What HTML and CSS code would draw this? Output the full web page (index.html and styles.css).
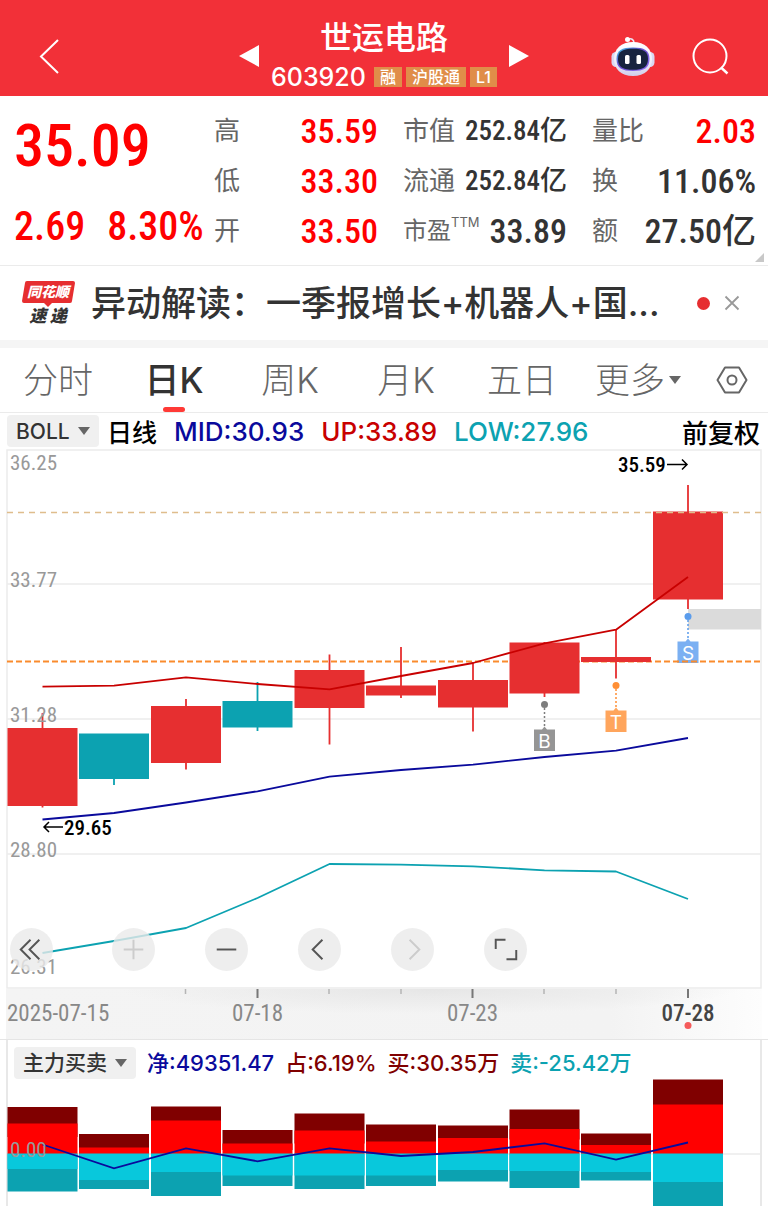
FILE: index.html
```html
<!DOCTYPE html>
<html lang="zh-CN">
<head>
<meta charset="utf-8">
<meta name="viewport" content="width=device-width, initial-scale=1">
<title>世运电路 603920</title>
<link rel="stylesheet" href="styles.css">
</head>
<body>
<header class="topbar">
  <button class="icon-btn back" aria-label="返回">
    <svg width="22" height="36" viewBox="0 0 22 36"><path d="M20 2 3 18.500 20 35" fill="none" stroke="#fff" stroke-width="2"/></svg>
  </button>
  <div class="stock">
    <button class="icon-btn" aria-label="上一只"><svg width="20" height="24" viewBox="0 0 20 24"><path d="M20 1v22L0 12z" fill="#fff"/></svg></button>
    <div class="stock-id">
      <h1 class="stock-name">世运电路</h1>
      <div class="stock-meta"><span class="code">603920</span><span class="tag">融</span><span class="tag">沪股通</span><span class="tag">L1</span></div>
    </div>
    <button class="icon-btn" aria-label="下一只"><svg width="20" height="24" viewBox="0 0 20 24"><path d="M0 1v22L20 12z" fill="#fff"/></svg></button>
  </div>
  <div class="tools">
    <button class="icon-btn" aria-label="智能助手">
      <svg width="44" height="40" viewBox="0 0 44 40">
        <defs>
          <linearGradient id="shell" x1="0" y1="0" x2="0" y2="1"><stop offset="0" stop-color="#fff"/><stop offset=".6" stop-color="#eeedfa"/><stop offset="1" stop-color="#cfcdea"/></linearGradient>
          <linearGradient id="rim" x1="0" y1="0" x2="1" y2="1"><stop offset="0" stop-color="#35c3dc"/><stop offset=".4" stop-color="#6a4fd0"/><stop offset="1" stop-color="#8d6cf0"/></linearGradient>
        </defs>
        <path d="M17 3.500C20 2 23 3 23 7" fill="none" stroke="#e9e8f6" stroke-width="1.600"/>
        <circle cx="16.500" cy="3.500" r="2.500" fill="#fff"/>
        <rect x="0.500" y="16" width="9" height="15" rx="4.500" fill="#d9d8f2"/>
        <rect x="34.500" y="16" width="9" height="15" rx="4.500" fill="#d9d8f2"/>
        <path d="M22 6C34 6 41 13 41 23S34 40 22 40 3 33 3 23 10 6 22 6z" fill="url(#shell)"/>
        <path d="M22 11.500C33 11.500 38.500 14 38.500 23S33 35 22 35 5.500 32 5.500 23 11 11.500 22 11.500z" fill="url(#rim)"/>
        <path d="M22 12.700C32 12.700 37 15 37 23S32 33.800 22 33.800 7 31 7 23 12 12.700 22 12.700z" fill="#17233f"/>
        <rect x="14" y="19" width="4.500" height="9" rx="1.500" fill="#fff"/>
        <rect x="25.500" y="19" width="4.500" height="9" rx="1.500" fill="#fff"/>
      </svg>
    </button>
    <button class="icon-btn" aria-label="搜索">
      <svg width="38" height="38" viewBox="0 0 38 38"><circle cx="18" cy="19" r="16.500" fill="none" stroke="#fff" stroke-width="2"/><path d="M29 30.500 35.500 36.500" stroke="#fff" stroke-width="2.400"/></svg>
    </button>
  </div>
</header>

<main>
<section class="quote">
  <div class="last">
    <div class="price">35.09</div>
    <div class="change"><span>2.69</span><span>8.30%</span></div>
  </div>
  <dl class="stats">
    <div class="stat"><dt>高</dt><dd class="up">35.59</dd></div>
    <div class="stat"><dt>市值</dt><dd class="small">252.84亿</dd></div>
    <div class="stat"><dt>量比</dt><dd class="up">2.03</dd></div>
    <div class="stat"><dt>低</dt><dd class="up">33.30</dd></div>
    <div class="stat"><dt>流通</dt><dd class="small">252.84亿</dd></div>
    <div class="stat"><dt>换</dt><dd>11.06%</dd></div>
    <div class="stat"><dt>开</dt><dd class="up">33.50</dd></div>
    <div class="stat"><dt class="pe">市盈<sup>TTM</sup></dt><dd>33.89</dd></div>
    <div class="stat"><dt>额</dt><dd>27.50亿</dd></div>
  </dl>
  <svg class="corner" width="9" height="9" viewBox="0 0 9 9"><path d="M9 0v9H0z" fill="#c8c8c8"/></svg>
</section>

<section class="news">
  <svg class="news-logo" width="54" height="48" viewBox="0 0 54 48">
    <path d="M5 2h46q2 0 2 2l-3 18q0 2-2 2H30l-4 4-4-4H2q-2 0-2-2L3 4q0-2 2-2z" fill="#e62e30"/>
    <text x="26" y="18" class="logo-top">同花顺</text>
    <text x="26" y="43" class="logo-bottom">速 递</text>
  </svg>
  <a class="news-title" href="#news">异动解读：一季报增长+机器人+国...</a>
  <span class="dot"></span>
  <button class="icon-btn" aria-label="关闭"><svg width="16" height="16" viewBox="0 0 16 16"><path d="M1.500 1.500l13 13M14.500 1.500l-13 13" stroke="#999" stroke-width="1.800"/></svg></button>
</section>

<nav class="tabs">
  <button class="tab">分时</button>
  <button class="tab active">日K</button>
  <button class="tab">周K</button>
  <button class="tab">月K</button>
  <button class="tab">五日</button>
  <button class="tab">更多<svg width="12" height="9" viewBox="0 0 12 9"><path d="M0 0h12L6 8z" fill="#666"/></svg></button>
  <button class="tab" aria-label="设置"><svg width="32" height="28" viewBox="0 0 32 28"><path d="M9 1.500h14L30.500 14 23 26.500H9L1.500 14z" fill="none" stroke="#666" stroke-width="2" stroke-linejoin="round"/><circle cx="16" cy="14" r="4.500" fill="none" stroke="#666" stroke-width="2"/></svg></button>
</nav>

<div class="indicator">
  <label class="picker"><select aria-label="主图指标"><option>BOLL</option></select><svg width="12" height="8" viewBox="0 0 12 8"><path d="M0 0h12L6 8z" fill="#666"/></svg></label>
  <span class="period">日线</span>
  <span class="mid">MID:30.93</span>
  <span class="red">UP:33.89</span>
  <span class="teal">LOW:27.96</span>
  <span class="adjust">前复权</span>
</div>

<section class="chart">
  <svg class="plot" viewBox="0 449 768 540" role="img" aria-label="日K线图">
    <g stroke="#ebebeb" stroke-width="1.500" fill="none">
      <path d="M7 584H761M7 719H761M7 854H761"/>
      <rect x="7" y="450" width="754" height="538"/>
    </g>
    <rect x="688" y="609" width="73" height="20.500" fill="#dbdbdb"/>
    <path d="M7 661.500H761" stroke="#fa8b2d" stroke-width="2" stroke-dasharray="6 3"/>
    <g stroke="#e62f30" stroke-width="1.800">
      <path d="M42.500 713V807.500M186 699V769.500M329.500 654.500V744.500M401 647V698M473 663V731.500M544.500 642V697M616 630V678.500M688 485V609"/>
    </g>
    <path d="M114 740V785M257.500 682V731" stroke="#0ca2b1" stroke-width="1.800"/>
    <g fill="#e62f30">
      <rect x="7.500" y="728" width="70" height="78"/>
      <rect x="151" y="706" width="70" height="57"/>
      <rect x="294.500" y="670" width="70" height="38"/>
      <rect x="366" y="685.500" width="70" height="10"/>
      <rect x="438" y="680" width="70" height="27.500"/>
      <rect x="509.500" y="642.500" width="70" height="51"/>
      <rect x="581" y="657" width="70" height="5"/>
      <rect x="653" y="511.500" width="70" height="88"/>
    </g>
    <g fill="#0ca2b1">
      <rect x="79" y="733.500" width="70" height="45.500"/>
      <rect x="222.500" y="701" width="70" height="26.500"/>
    </g>
    <path d="M7 512.500H761" stroke="#dfbd8c" stroke-width="1.300" stroke-dasharray="6 5"/>
    <g fill="none" stroke-width="1.800" stroke-linejoin="round">
      <polyline stroke="#c80000" points="42.500,686.700 114,685.700 186,677.300 257.500,684 329.500,689.300 401,676 473,663 544.500,643.300 616,629.700 688,577"/>
      <polyline stroke="#0a0a9c" points="42.500,819.500 114,813 186,802.500 257.500,791.300 329.500,776.700 401,770 473,764.700 544.500,757 616,750.700 688,738"/>
      <polyline stroke="#0ca2b1" points="42.500,953 114,941 186,928 257.500,898 329.500,864 401,864.700 473,866.300 544.500,870.300 616,871.500 688,899"/>
    </g>
    <g class="axis-num">
      <text x="10" y="470">36.25</text><text x="10" y="587">33.77</text><text x="10" y="722">31.28</text><text x="10" y="857">28.80</text><text x="10" y="974">26.31</text>
    </g>
    <g class="extreme">
      <text x="64" y="835">29.65</text><text x="618" y="472">35.59</text>
      <path d="M63 827H44M49 822l-5 5 5 5M667 464.500H687M682 459.500l5 5-5 5"/>
    </g>
    <g class="marker" fill="#5a9cec" stroke="#5a9cec"><circle cx="688" cy="616.500" r="3.500" stroke="none"/><path d="M688 620V640" stroke-width="1.500" stroke-dasharray="2 2"/><path d="M677.500 641.500h8l2.500-3 2.500 3h8v21.500h-21z" fill="#7bb0f2" stroke="none"/><text x="688" y="659.500">S</text></g>
    <g class="marker" fill="#ff8f35" stroke="#ff8f35"><circle cx="616" cy="685.500" r="3.500" stroke="none"/><path d="M616 689V709" stroke-width="1.500" stroke-dasharray="2 2"/><path d="M605.500 710.500h8l2.500-3 2.500 3h8v21.500h-21z" fill="#ffa55c" stroke="none"/><text x="616" y="728.500">T</text></g>
    <g class="marker" fill="#7d7d7d" stroke="#7d7d7d"><circle cx="544.500" cy="704.500" r="3.500" stroke="none"/><path d="M544.500 708V728" stroke-width="1.500" stroke-dasharray="2 2"/><path d="M534 729.500h8l2.500-3 2.500 3h8v21.500h-21z" fill="#959595" stroke="none"/><text x="544.500" y="747.500">B</text></g>
    <path d="M677 661.500H699" stroke="#fa8b2d" stroke-width="2" stroke-dasharray="6 3" stroke-dashoffset="4"/>
  </svg>
  <div class="controls">
    <button class="round first" aria-label="最早"><svg viewBox="0 0 44 44"><path d="M21 12 11 22l10 10M30 12 20 22l10 10"/></svg></button>
    <button class="round" aria-label="放大" disabled><svg viewBox="0 0 44 44"><path d="M12 22h20M22 12v20"/></svg></button>
    <button class="round" aria-label="缩小"><svg viewBox="0 0 44 44"><path d="M12 22h20"/></svg></button>
    <button class="round" aria-label="左移"><svg viewBox="0 0 44 44"><path d="M25 12 15 22l10 10"/></svg></button>
    <button class="round" aria-label="右移" disabled><svg viewBox="0 0 44 44"><path d="M19 12l10 10-10 10"/></svg></button>
    <button class="round" aria-label="全屏"><svg viewBox="0 0 44 44"><path d="M12 21.500V12h10M23 32h10v-9.500"/></svg></button>
  </div>
</section>

<svg class="plot dates" viewBox="0 0 768 50" role="img" aria-label="日期轴">
  <defs>
    <linearGradient id="fade"><stop offset="0" stop-color="#f4f4f4"/><stop offset=".8" stop-color="#f3f3f3"/><stop offset="1" stop-color="#fdfdfd"/></linearGradient>
    <radialGradient id="shade" cx=".5" cy="0" r=".5"><stop offset="0" stop-color="#e6e6e6"/><stop offset="1" stop-color="#e6e6e6" stop-opacity="0"/></radialGradient>
  </defs>
  <rect x="6" width="756" height="50" fill="url(#fade)"/>
  <rect x="120" width="620" height="50" fill="url(#shade)"/>
  <path d="M185.500 0v5M329 0v5M401 0v5M544 0v5M616 0v5" stroke="#b5b5b5" stroke-width="1.500"/>
  <path d="M257.500 0v9M472.500 0v9M688 0v9" stroke="#777" stroke-width="2"/>
  <text x="7" y="32">2025-07-15</text>
  <text x="257.500" y="32" text-anchor="middle">07-18</text>
  <text x="472.500" y="32" text-anchor="middle">07-23</text>
  <text x="688" y="32" text-anchor="middle" class="today">07-28</text>
  <circle cx="688" cy="36.500" r="3.500" fill="#f55b5b"/>
</svg>

<section class="flow">
  <div class="legend">
    <label class="picker"><select aria-label="副图指标"><option>主力买卖</option></select><svg width="12" height="8" viewBox="0 0 12 8"><path d="M0 0h12L6 8z" fill="#666"/></svg></label>
    <span class="mid">净:49351.47</span>
    <span class="maroon">占:6.19%</span>
    <span class="maroon">买:30.35万</span>
    <span class="teal">卖:-25.42万</span>
  </div>
  <svg class="plot" viewBox="0 1079 768 127" role="img" aria-label="主力买卖图">
    <path d="M7 1154H761" stroke="#ebebeb" stroke-width="1.500"/>
    <path d="M7 1079V1206M761 1079V1206" stroke="#e8e8e8" stroke-width="2"/>
    <g fill="#800000">
      <rect x="7.500" y="1107" width="70" height="30"/><rect x="79" y="1134" width="70" height="18"/><rect x="151" y="1106.500" width="70" height="30"/><rect x="222.500" y="1130" width="70" height="20"/><rect x="294.500" y="1113.500" width="70" height="30"/><rect x="366" y="1124.500" width="70" height="25"/><rect x="438" y="1125.500" width="70" height="25"/><rect x="509.500" y="1109.500" width="70" height="30"/><rect x="581" y="1133.500" width="70" height="18"/><rect x="653" y="1079.500" width="70" height="40"/>
    </g>
    <g fill="#f00">
      <rect x="7.500" y="1123.500" width="70" height="30.500"/><rect x="79" y="1147.500" width="70" height="6.500"/><rect x="151" y="1120.500" width="70" height="33.500"/><rect x="222.500" y="1143.500" width="70" height="10.500"/><rect x="294.500" y="1130.500" width="70" height="23.500"/><rect x="366" y="1141.500" width="70" height="12.500"/><rect x="438" y="1138" width="70" height="16"/><rect x="509.500" y="1129" width="70" height="25"/><rect x="581" y="1145" width="70" height="9"/><rect x="653" y="1104.500" width="70" height="49.500"/>
    </g>
    <g fill="#0ca2b1">
      <rect x="7.500" y="1154" width="70" height="37.500"/><rect x="79" y="1154" width="70" height="35"/><rect x="151" y="1154" width="70" height="42"/><rect x="222.500" y="1154" width="70" height="32"/><rect x="294.500" y="1154" width="70" height="35"/><rect x="366" y="1154" width="70" height="32"/><rect x="438" y="1154" width="70" height="27.500"/><rect x="509.500" y="1154" width="70" height="34"/><rect x="581" y="1154" width="70" height="26.500"/><rect x="653" y="1154" width="70" height="52"/>
    </g>
    <g fill="#08c8dc">
      <rect x="7.500" y="1153.500" width="70" height="15.500"/><rect x="79" y="1153.500" width="70" height="26.500"/><rect x="151" y="1153.500" width="70" height="18.500"/><rect x="222.500" y="1153.500" width="70" height="22"/><rect x="294.500" y="1153.500" width="70" height="22"/><rect x="366" y="1153.500" width="70" height="22"/><rect x="438" y="1153.500" width="70" height="16.500"/><rect x="509.500" y="1153.500" width="70" height="17.500"/><rect x="581" y="1153.500" width="70" height="18.500"/><rect x="653" y="1153.500" width="70" height="28.500"/>
    </g>
    <polyline fill="none" stroke="#0a0a9c" stroke-width="1.800" points="42.500,1144.500 114,1168.300 186,1148.300 257.500,1161.300 329.500,1148.300 401,1156 473,1152 544.500,1143.300 616,1159.700 688,1142.500"/>
    <text class="axis-num" x="10" y="1157">0.00</text>
  </svg>
</section>
</main>
</body>
</html>
```
FILE: styles.css
```css
:root {
  --ui: Inter, "Noto Sans CJK SC", sans-serif;
  --num: "Roboto Condensed", "Liberation Sans Narrow", Roboto, "Noto Sans CJK SC", sans-serif;
}
* { box-sizing: border-box; }
body { margin: 0; background: #fff; color: #333; font-family: var(--ui); overflow-x: hidden; }
button, select { font: inherit; color: inherit; border: 0; padding: 0; background: none; }
svg { display: block; }
.icon-btn { display: flex; flex: none; align-items: center; justify-content: center; }

.topbar { display: grid; grid-template-columns: 1fr auto 1fr; align-items: center; height: 96px; padding: 16px 38px 0; background: #f23038; color: #fff; }
.back { justify-self: start; }
.stock { display: flex; align-items: center; gap: 12px; }
.stock-id { display: flex; flex-direction: column; align-items: center; }
.stock-name { margin: 0; font-size: 32px; line-height: 42px; font-weight: 500; }
.stock-meta { display: flex; align-items: center; gap: 4px; height: 36px; }
.code { margin-right: 4px; font-size: 25px; font-weight: 500; }
.tag { padding: 0 6px; background: #e08d49; font-size: 16px; line-height: 20px; font-weight: 500; }
.tools { display: flex; justify-self: end; align-items: center; gap: 37px; }

.quote { position: relative; display: flex; justify-content: space-between; padding: 7px 12px 0 14px; border-bottom: 1px solid #ebebeb; }
.last { display: flex; flex-direction: column; color: #f00; font-family: var(--num); font-weight: 500; }
.price { font-size: 60px; line-height: 86px; }
.change { display: flex; gap: 22px; font-size: 40px; line-height: 76px; }
.stats { display: grid; align-self: flex-start; grid-template-columns: repeat(3, 164px); column-gap: 25px; grid-auto-rows: 50px; margin: 3px 0 0; line-height: 50px; }
.stat { display: flex; justify-content: space-between; white-space: nowrap; }
.stat dt { color: #666; font-size: 26px; }
.stat .pe { font-size: 24px; }
.pe sup { font-size: 13px; line-height: 1; vertical-align: 12px; }
.stat dd { margin: 0; font-family: var(--num); font-size: 34px; font-weight: 500; }
.stat .small { font-size: 27px; }
.stat .up { color: #f00; }
.corner { position: absolute; right: 4px; bottom: 3px; }

.news { display: flex; align-items: center; height: 82px; padding: 0 28px 0 22px; border-bottom: 8px solid #f5f5f5; }
.news-logo { flex: none; margin-right: 15px; }
.logo-top, .logo-bottom { font-family: var(--ui); font-style: italic; font-weight: 900; text-anchor: middle; }
.logo-top { font-size: 14px; fill: #fff; }
.logo-bottom { font-size: 17px; fill: #333; }
.news-title { flex: 1; overflow: hidden; color: #333; font-size: 35px; line-height: 50px; font-weight: 500; white-space: nowrap; text-decoration: none; }
.dot { width: 13px; height: 13px; margin-right: 14px; border-radius: 50%; background: #e62e30; }

.tabs { display: grid; grid-template-columns: repeat(6, 1fr) 72px; height: 65px; border-bottom: 1px solid #ebebeb; }
.tab { position: relative; display: flex; align-items: center; justify-content: center; gap: 4px; color: #666; font-size: 35px; line-height: 60px; font-weight: 300; white-space: nowrap; }
.active { color: #333; font-weight: 500; }
.active::after { content: ""; position: absolute; bottom: 0; left: 50%; width: 22px; height: 5px; margin-left: -11px; border-radius: 3px; background: #ff3a36; }

.indicator { display: flex; align-items: center; gap: 17px; height: 36px; padding: 0 8px 0 7px; font-size: 26px; font-weight: 500; white-space: nowrap; }
.picker { display: flex; align-items: center; gap: 8px; height: 32px; padding: 0 9px; border-radius: 4px; background: #f0f0f0; font-size: 21px; font-weight: 500; }
.picker select { appearance: none; }
.period { margin-left: -9px; color: #000; font-size: 25px; }
.mid { color: #0a0a9c; }
.red { color: #c80000; }
.teal { color: #0ca2b1; }
.maroon { color: #800000; }
.adjust { margin-left: auto; color: #000; }

.chart { position: relative; }
.plot { width: 100%; height: auto; }
.axis-num, .extreme { font-family: var(--num); font-size: 21px; }
.axis-num { fill: #999; }
.extreme { fill: #000; font-weight: 500; }
.extreme path { fill: none; stroke: #000; stroke-width: 1.5px; }
.marker text { font-family: var(--ui); font-size: 19px; fill: #fff; stroke: none; text-anchor: middle; }
.controls { position: absolute; left: 10px; bottom: 18px; display: flex; gap: 50px; }
.round { width: 43px; height: 43px; border-radius: 50%; background: rgba(234, 234, 234, .8); }
.first { margin-right: 9px; }
.round path { fill: none; stroke: #555; stroke-width: 2px; }
.round:disabled path { stroke: #ccc; }
.dates { font-family: var(--num); font-size: 23px; fill: #888; }
.today { fill: #444; font-weight: 500; }

.flow { border-top: 1px solid #e5e5e5; }
.legend { display: flex; align-items: center; gap: 11px; height: 39px; margin: 0 6px; padding: 6px 6px 0; border: solid #e8e8e8; border-width: 0 2px; font-size: 22px; line-height: 30px; font-weight: 500; white-space: nowrap; }
```
